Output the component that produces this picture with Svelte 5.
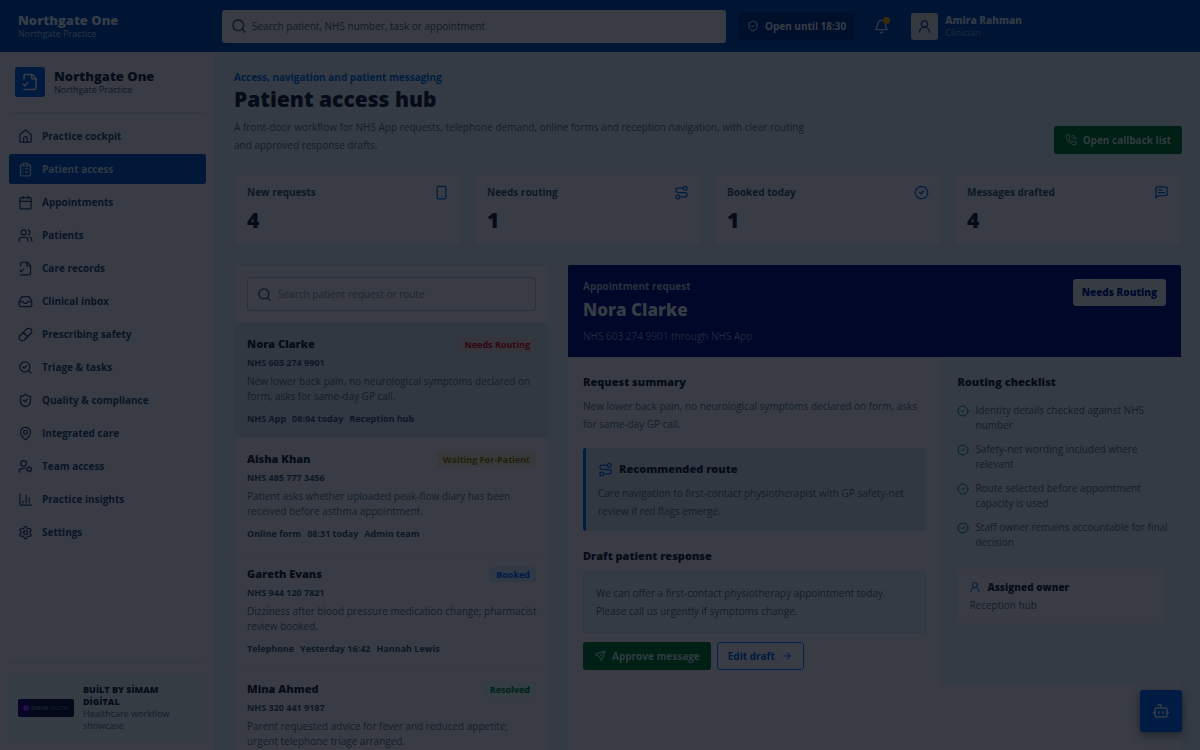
<script>
  const icons = {
    home: '<path d="M15 21v-6a3 3 0 0 0-6 0v6"/><path d="M3 10a2 2 0 0 1 .709-1.528l7-5.999a2 2 0 0 1 2.582 0l7 5.999A2 2 0 0 1 21 10v9a2 2 0 0 1-2 2H5a2 2 0 0 1-2-2z"/>',
    clipboard: '<rect x="8" y="2" width="8" height="4" rx="1"/><path d="M16 4h2a2 2 0 0 1 2 2v14a2 2 0 0 1-2 2H6a2 2 0 0 1-2-2V6a2 2 0 0 1 2-2h2M12 11h4M12 16h4M8 11h.01M8 16h.01"/>',
    calendar: '<path d="M8 2v4M16 2v4M3 10h18"/><rect x="3" y="4" width="18" height="18" rx="2"/>',
    users: '<path d="M16 21v-2a4 4 0 0 0-4-4H6a4 4 0 0 0-4 4v2"/><circle cx="9" cy="7" r="4"/><path d="M22 21v-2a4 4 0 0 0-3-3.870M16 3.130a4 4 0 0 1 0 7.750"/>',
    file: '<path d="M4 22h14a2 2 0 0 0 2-2V7l-5-5H6a2 2 0 0 0-2 2v4"/><path d="M14 2v4a2 2 0 0 0 2 2h4M3 15l2 2 4-4"/>',
    inbox: '<path d="M22 12h-6l-2 3h-4l-2-3H2"/><path d="M5.45 5.11 2 12v6a2 2 0 0 0 2 2h16a2 2 0 0 0 2-2v-6l-3.45-6.89A2 2 0 0 0 16.76 4H7.24a2 2 0 0 0-1.79 1.11z"/>',
    pill: '<path d="m10.5 20.5 10-10a4.95 4.95 0 1 0-7-7l-10 10a4.95 4.95 0 1 0 7 7ZM8.5 8.5l7 7"/>',
    triage: '<path d="m8 11 2 2 4-4M21 21l-4.3-4.3"/><circle cx="11" cy="11" r="8"/>',
    shield: '<path d="M20 13c0 5-3.5 7.5-7.66 8.95a1 1 0 0 1-.67-.01C7.5 20.5 4 18 4 13V6a1 1 0 0 1 1-1c2 0 4.5-1.2 6.24-2.72a1.17 1.17 0 0 1 1.52 0C14.51 3.81 17 5 19 5a1 1 0 0 1 1 1z"/><path d="m9 12 2 2 4-4"/>',
    pin: '<path d="M20 10c0 4.993-5.539 10.193-7.399 11.799a1 1 0 0 1-1.202 0C9.539 20.193 4 14.993 4 10a8 8 0 0 1 16 0"/><circle cx="12" cy="10" r="3"/>',
    team: '<circle cx="9" cy="7" r="4.500"/><path d="M2 21v-1a6 6 0 0 1 6-5h3"/><circle cx="18" cy="16.500" r="3.200"/><path d="M18 12.300v1M18 19.700v1M14.400 14.400l.8.5M20.800 18.100l.8.5M14.400 18.600l.8-.5M20.800 14.900l.8-.5"/>',
    chart: '<path d="M3 3v16a2 2 0 0 0 2 2h16M18 17V9M13 17V5M8 17v-3"/>',
    settings: '<path d="M9.671 4.136a2.34 2.34 0 0 1 4.659 0 2.34 2.34 0 0 0 3.319 1.915 2.34 2.34 0 0 1 2.33 4.033 2.34 2.34 0 0 0 0 3.831 2.34 2.34 0 0 1-2.33 4.033 2.34 2.34 0 0 0-3.319 1.915 2.34 2.34 0 0 1-4.659 0 2.34 2.34 0 0 0-3.32-1.915 2.34 2.34 0 0 1-2.33-4.033 2.34 2.34 0 0 0 0-3.831A2.34 2.34 0 0 1 6.35 6.051a2.34 2.34 0 0 0 3.319-1.915"/><circle cx="12" cy="12" r="3"/>',
    search: '<circle cx="11" cy="11" r="8"/><path d="m21 21-4.3-4.3"/>',
    bell: '<path d="M10.268 21a2 2 0 0 0 3.464 0M3.262 15.326A1 1 0 0 0 4 17h16a1 1 0 0 0 .74-1.673C19.41 13.956 18 12.499 18 8A6 6 0 0 0 6 8c0 4.499-1.411 5.956-2.738 7.326"/>',
    user: '<circle cx="12" cy="8" r="5"/><path d="M20 21a8 8 0 0 0-16 0"/>',
    phone: '<path d="M22 16.92v3a2 2 0 0 1-2.18 2 19.79 19.79 0 0 1-8.63-3.07 19.5 19.5 0 0 1-6-6 19.79 19.79 0 0 1-3.07-8.67A2 2 0 0 1 4.11 2h3a2 2 0 0 1 2 1.72c.127.96.361 1.903.7 2.81a2 2 0 0 1-.45 2.11L8.09 9.91a16 16 0 0 0 6 6l1.27-1.27a2 2 0 0 1 2.11-.45c.907.339 1.85.573 2.81.7A2 2 0 0 1 22 16.92z"/><path d="M14.05 2a9 9 0 0 1 8 7.94M14.05 6A5 5 0 0 1 18 10"/>',
    mobile: '<rect x="5" y="2" width="14" height="20" rx="2"/><path d="M12 18h.01"/>',
    route: '<circle cx="6" cy="19" r="3"/><path d="M9 19h8.500a3.500 3.500 0 0 0 0-7h-11a3.500 3.500 0 0 1 0-7H15"/><circle cx="18" cy="5" r="3"/>',
    check: '<circle cx="12" cy="12" r="10"/><path d="m9 12 2 2 4-4"/>',
    message: '<path d="M21 15a2 2 0 0 1-2 2H7l-4 4V5a2 2 0 0 1 2-2h14a2 2 0 0 1 2 2zM13 8H7M17 12H7"/>',
    send: '<path d="M14.536 21.686a.5.5 0 0 0 .937-.024l6.500-19a.496.496 0 0 0-.635-.635l-19 6.500a.5.5 0 0 0-.024.937l7.930 3.180a2 2 0 0 1 1.112 1.110zM21.854 2.147l-10.940 10.939"/>',
    arrow: '<path d="M5 12h14M12 5l7 7-7 7"/>',
    bot: '<path d="M12 8V4H8"/><rect x="4" y="8" width="16" height="12" rx="2"/><path d="M2 14h2M20 14h2M15 13v2M9 13v2"/>'
  };

  const nav = [
    ['home', 'Practice cockpit'],
    ['clipboard', 'Patient access'],
    ['calendar', 'Appointments'],
    ['users', 'Patients'],
    ['file', 'Care records'],
    ['inbox', 'Clinical inbox'],
    ['pill', 'Prescribing safety'],
    ['triage', 'Triage & tasks'],
    ['shield', 'Quality & compliance'],
    ['pin', 'Integrated care'],
    ['team', 'Team access'],
    ['chart', 'Practice insights'],
    ['settings', 'Settings']
  ];

  const stats = [
    ['New requests', 4, 'mobile'],
    ['Needs routing', 1, 'route'],
    ['Booked today', 1, 'check'],
    ['Messages drafted', 4, 'message']
  ];

  const requests = [
    { name: 'Nora Clarke', nhs: '603 274 9901', status: 'Needs Routing', tone: 'red', text: 'New lower back pain, no neurological symptoms declared on form, asks for same-day GP call.', meta: ['NHS App', '08:04 today', 'Reception hub'] },
    { name: 'Aisha Khan', nhs: '485 777 3456', status: 'Waiting For-Patient', tone: 'amber', text: 'Patient asks whether uploaded peak-flow diary has been received before asthma appointment.', meta: ['Online form', '08:31 today', 'Admin team'] },
    { name: 'Gareth Evans', nhs: '944 120 7821', status: 'Booked', tone: 'blue', text: 'Dizziness after blood pressure medication change; pharmacist review booked.', meta: ['Telephone', 'Yesterday 16:42', 'Hannah Lewis'] },
    { name: 'Mina Ahmed', nhs: '320 441 9187', status: 'Resolved', tone: 'mint', text: 'Parent requested advice for fever and reduced appetite; urgent telephone triage arranged.', meta: [] }
  ];

  const checklist = [
    'Identity details checked against NHS number',
    'Safety-net wording included where relevant',
    'Route selected before appointment capacity is used',
    'Staff owner remains accountable for final decision'
  ];

  let selected = $state(0);
</script>

{#snippet icon(name, size)}
  <svg width={size} height={size} viewBox="0 0 24 24" fill="none" stroke="currentColor" stroke-width="2" stroke-linecap="round" stroke-linejoin="round" aria-hidden="true">{@html icons[name]}</svg>
{/snippet}

<div class="app">
  <header class="topbar">
    <div class="top-brand">
      <strong>Northgate One</strong>
      <span>Northgate Practice</span>
    </div>
    <label class="top-search">
      {@render icon('search', 16)}
      <input type="search" aria-label="Search" placeholder="Search patient, NHS number, task or appointment" />
    </label>
    <div class="hours">{@render icon('shield', 12)}<span>Open until 18:30</span></div>
    <button class="bell" aria-label="Notifications">{@render icon('bell', 15)}<i></i></button>
    <div class="account">
      <span class="avatar">{@render icon('user', 15)}</span>
      <div><strong>Amira Rahman</strong><span>Clinician</span></div>
    </div>
  </header>

  <aside class="sidebar">
    <div class="brand">
      <span class="logo">{@render icon('file', 18)}</span>
      <div><strong>Northgate One</strong><span>Northgate Practice</span></div>
    </div>
    <nav>
      {#each nav as [ic, label], i}
        <a href="#{ic}" class:active={i === 1}>{@render icon(ic, 15)}<span>{label}</span></a>
      {/each}
    </nav>
    <div class="credit">
      <div class="credit-card">
        <span class="maker"><i></i><b>SIMAM</b> DIGITAL</span>
        <div><strong>BUİLT BY SİMAM DİGİTAL</strong><span>Healthcare workflow showcase</span></div>
      </div>
    </div>
  </aside>

  <main>
    <div class="page-head">
      <div>
        <p class="eyebrow">Access, navigation and patient messaging</p>
        <h1>Patient access hub</h1>
        <p class="intro">A front-door workflow for NHS App requests, telephone demand, online forms and reception navigation, with clear routing and approved response drafts.</p>
      </div>
      <button class="btn green">{@render icon('phone', 12)}Open callback list</button>
    </div>

    <section class="stats">
      {#each stats as [label, value, ic]}
        <article>
          <div><span>{label}</span>{@render icon(ic, 15)}</div>
          <strong>{value}</strong>
        </article>
      {/each}
    </section>

    <div class="work">
      <section class="queue">
        <div class="queue-search">
          <label>
            {@render icon('search', 15)}
            <input type="search" aria-label="Search requests" placeholder="Search patient request or route" />
          </label>
        </div>
        {#each requests as r, i}
          <button class="request" class:selected={selected === i} onclick={() => (selected = i)}>
            <span class="row"><strong>{r.name}</strong><em class={r.tone}>{r.status}</em></span>
            <span class="nhs">NHS {r.nhs}</span>
            <span class="text">{r.text}</span>
            {#if r.meta.length}
              <span class="meta">{#each r.meta as m}<span>{m}</span>{/each}</span>
            {/if}
          </button>
        {/each}
      </section>

      <section class="detail">
        <div class="detail-head">
          <div>
            <p class="kind">Appointment request</p>
            <h2>Nora Clarke</h2>
            <p class="via">NHS 603 274 9901 through NHS App</p>
          </div>
          <span class="state">Needs Routing</span>
        </div>
        <div class="detail-body">
          <div class="summary">
            <h3>Request summary</h3>
            <p>New lower back pain, no neurological symptoms declared on form, asks for same-day GP call.</p>
            <div class="recommended">
              <h3>{@render icon('route', 15)}Recommended route</h3>
              <p>Care navigation to first-contact physiotherapist with GP safety-net review if red flags emerge.</p>
            </div>
            <h3>Draft patient response</h3>
            <div class="draft"><p>We can offer a first-contact physiotherapy appointment today. Please call us urgently if symptoms change.</p></div>
            <div class="actions">
              <button class="btn green">{@render icon('send', 12)}Approve message</button>
              <button class="btn outline">Edit draft{@render icon('arrow', 12)}</button>
            </div>
          </div>
          <aside class="checks">
            <h3>Routing checklist</h3>
            <ul>
              {#each checklist as c}
                <li>{@render icon('check', 12)}<span>{c}</span></li>
              {/each}
            </ul>
            <div class="owner">
              <h4>{@render icon('user', 12)}Assigned owner</h4>
              <p>Reception hub</p>
            </div>
          </aside>
        </div>
      </section>
    </div>
  </main>

  <button class="assistant" aria-label="Open assistant">{@render icon('bot', 18)}</button>
</div>

<style>
  :global(body) {
    margin: 0;
    background: #343b44;
  }
  .app {
    --card: #393c44;
    --page: #343b44;
    --line: #333942;
    --ink: #060c17;
    --text: #0c1726;
    --soft: #131c29;
    --accent: #001c40;
    height: 100vh;
    display: grid;
    grid-template: 52px minmax(0, 1fr) / 216px minmax(0, 1fr);
    font: 10px/15px "Open Sans", "Noto Sans", sans-serif;
    color: var(--soft);
    background: var(--page);
  }
  .app :global(*) {
    box-sizing: border-box;
  }
  .app :global(svg) {
    flex: none;
    display: block;
  }
  p, h1, h2, h3, h4, ul {
    margin: 0;
    padding: 0;
  }
  strong, h1, h2, h3, h4 {
    font-weight: 800;
    color: var(--ink);
  }
  button, input {
    font: inherit;
    color: inherit;
  }
  button {
    cursor: pointer;
  }
  input {
    flex: 1;
    min-width: 0;
    padding: 0;
    border: 0;
    outline: 0;
    background: none;
  }

  .topbar {
    grid-column: 1 / -1;
    display: flex;
    align-items: center;
    padding: 0 18px;
    background: #001533;
  }
  .top-brand {
    width: 204px;
    flex: none;
  }
  .top-brand strong, .top-brand span, .brand strong, .brand div span, .account strong, .account div span {
    display: block;
  }
  .top-brand strong {
    font-size: 13px;
    line-height: 16px;
    color: #363d48;
  }
  .top-brand span {
    font-size: 9px;
    line-height: 12px;
    color: #2b3544;
  }
  .top-search {
    flex: 0 1 504px;
    height: 33px;
    display: flex;
    align-items: center;
    gap: 5px;
    padding: 0 9px;
    border-radius: 3px;
    background: #393c42;
    color: #0d1622;
  }
  .top-search input::placeholder {
    color: #111a26;
    opacity: 1;
  }
  .hours {
    display: flex;
    align-items: center;
    gap: 6px;
    height: 28px;
    margin-left: 12px;
    padding: 0 9px;
    border-radius: 3px;
    background: #00102b;
    color: #363d46;
    font-weight: 700;
  }
  .bell {
    position: relative;
    display: grid;
    place-items: center;
    width: 30px;
    height: 30px;
    margin-left: 11px;
    padding: 0;
    border: 0;
    background: none;
    color: #303946;
  }
  .bell i {
    position: absolute;
    top: 6px;
    right: 6px;
    width: 7px;
    height: 7px;
    border-radius: 50%;
    background: #3b2a08;
  }
  .account {
    display: flex;
    align-items: center;
    gap: 7px;
    margin-left: 15px;
  }
  .avatar {
    display: grid;
    place-items: center;
    width: 27px;
    height: 27px;
    border-radius: 3px;
    background: #34393f;
    color: #0a1430;
  }
  .account strong {
    line-height: 14px;
    color: #303945;
  }
  .account div span {
    font-size: 9px;
    line-height: 12px;
    color: #1f2c3e;
  }

  .sidebar {
    display: flex;
    flex-direction: column;
    padding: 0 9px;
    border-right: 1px solid var(--line);
    background: var(--card);
  }
  .brand {
    display: flex;
    align-items: center;
    gap: 9px;
    height: 61px;
    padding-left: 6px;
    border-bottom: 1px solid var(--line);
  }
  .logo {
    display: grid;
    place-items: center;
    width: 30px;
    height: 30px;
    border-radius: 3px;
    background: #001a40;
    color: #3a4048;
  }
  .brand strong {
    font-size: 13px;
    line-height: 16px;
  }
  .brand div span {
    font-size: 9px;
    line-height: 12px;
    color: var(--text);
  }
  nav {
    flex: 1;
    display: flex;
    flex-direction: column;
    gap: 3px;
    padding-top: 8px;
  }
  nav a {
    display: flex;
    align-items: center;
    gap: 9px;
    height: 30px;
    padding: 0 9px;
    border-radius: 3px;
    color: #091426;
    font-weight: 700;
    text-decoration: none;
  }
  nav a.active {
    background: #001738;
    color: #303944;
  }
  .credit {
    padding: 12px 0 9px;
    border-top: 1px solid var(--line);
  }
  .credit-card {
    display: flex;
    align-items: center;
    gap: 9px;
    padding: 9px;
    border-radius: 3px;
    background: #353c44;
    font-size: 9px;
    line-height: 12px;
  }
  .credit-card strong, .credit-card div span {
    display: block;
  }
  .maker {
    flex: none;
    display: flex;
    align-items: center;
    justify-content: center;
    gap: 2px;
    width: 56px;
    height: 18px;
    border-radius: 2px;
    background: linear-gradient(90deg, #09042a, #020817 40%);
    color: #1b2230;
    font-size: 5px;
    white-space: nowrap;
  }
  .maker i {
    width: 6px;
    height: 6px;
    border-radius: 50%;
    background: #220c4c;
  }

  main {
    padding: 18px;
    overflow: auto;
    scrollbar-width: none;
  }
  .page-head {
    display: flex;
    align-items: flex-end;
    justify-content: space-between;
    gap: 18px;
  }
  .eyebrow {
    font-weight: 700;
    color: var(--accent);
  }
  h1 {
    font-size: 21px;
    line-height: 29px;
  }
  .intro {
    max-width: 580px;
    margin-top: 4px;
    line-height: 18px;
  }
  .btn {
    display: inline-flex;
    align-items: center;
    gap: 6px;
    height: 28px;
    padding: 0 10px;
    border: 1px solid transparent;
    border-radius: 3px;
    font-weight: 700;
    white-space: nowrap;
  }
  .green {
    background: #001f15;
    color: #303c40;
  }
  .outline {
    border-color: #002353;
    background: none;
    color: #001a42;
  }

  .stats {
    display: grid;
    grid-template-columns: repeat(4, minmax(0, 1fr));
    gap: 12px;
    margin: 19px 0 18px;
  }
  .stats article {
    padding: 11px 12px;
    height: 73px;
    border: 1px solid var(--line);
    border-radius: 3px;
    background: var(--card);
  }
  .stats article div {
    display: flex;
    align-items: center;
    justify-content: space-between;
    font-weight: 700;
    color: var(--text);
  }
  .stats :global(svg) {
    color: var(--accent);
  }
  .stats strong {
    display: block;
    margin-top: 6px;
    font-size: 21px;
    line-height: 28px;
  }

  .work {
    display: grid;
    grid-template-columns: minmax(0, 315fr) minmax(0, 615fr);
    gap: 18px;
  }
  .queue, .detail {
    border: 1px solid var(--line);
    border-radius: 3px;
    background: var(--card);
    overflow: hidden;
  }
  .queue-search {
    padding: 12px;
  }
  .queue-search label {
    display: flex;
    align-items: center;
    gap: 6px;
    height: 34px;
    padding: 0 9px;
    border: 1px solid #28313c;
    border-radius: 3px;
    color: #0d1726;
  }
  .queue-search input::placeholder {
    color: #1c2530;
    opacity: 1;
  }
  .request {
    display: flex;
    flex-direction: column;
    width: 100%;
    padding: 12px 9px 11px 12px;
    border: 0;
    border-bottom: 1px solid #363a42;
    background: none;
    text-align: left;
  }
  .request.selected {
    background: #313842;
  }
  .row {
    display: flex;
    align-items: center;
    justify-content: space-between;
    margin: 0 3px 3px 0;
    line-height: 18px;
  }
  .row strong {
    font-size: 11px;
  }
  .row em {
    padding: 0 6px;
    border-radius: 3px;
    font-size: 9px;
    line-height: 15px;
    font-style: normal;
    font-weight: 700;
  }
  .red {
    background: #35353d;
    color: #35040f;
  }
  .amber {
    background: #38393a;
    color: #231f0c;
  }
  .blue {
    background: #313945;
    color: #00184a;
  }
  .mint {
    background: #333d42;
    color: #002018;
  }
  .nhs, .meta {
    font-size: 9px;
    line-height: 14px;
    font-weight: 700;
    color: var(--text);
  }
  .text {
    margin: 4px 0 8px;
  }
  .meta {
    display: flex;
    gap: 6px;
  }

  .detail-head {
    display: flex;
    align-items: flex-start;
    justify-content: space-between;
    margin: -1px -1px 0;
    padding: 15px 16px 12px;
    background: #000728;
  }
  .kind {
    font-weight: 700;
    color: #27313f;
  }
  h2 {
    margin-top: 3px;
    font-size: 17px;
    line-height: 26px;
    color: #343c44;
  }
  .via {
    margin-top: 4px;
    line-height: 18px;
    color: #1e2a3f;
  }
  .state {
    padding: 0 9px;
    border-radius: 3px;
    background: #363c42;
    color: #000a2c;
    font-weight: 800;
    line-height: 27px;
  }
  .detail-body {
    display: grid;
    grid-template-columns: minmax(0, 374fr) minmax(0, 240fr);
    align-items: start;
    min-height: 480px;
  }
  .summary {
    padding: 15px;
  }
  h3 {
    display: flex;
    align-items: center;
    gap: 6px;
    font-size: 11px;
    line-height: 20px;
  }
  .summary p {
    line-height: 18px;
  }
  .summary > p {
    margin-top: 5px;
  }
  .recommended {
    margin: 15px 0;
    padding: 11px 12px;
    border-left: 3px solid #001c45;
    border-radius: 3px;
    background: #313842;
  }
  .recommended p {
    margin-top: 5px;
  }
  .recommended :global(svg) {
    color: var(--accent);
  }
  .draft {
    margin-top: 5px;
    padding: 12px;
    border: 1px solid #303843;
    border-radius: 3px;
    background: #343b44;
  }
  .actions {
    display: flex;
    gap: 6px;
    margin-top: 9px;
  }
  .checks {
    min-height: 327px;
    padding: 15px 9px 15px 15px;
    border-left: 1px solid var(--line);
    background: #343b44;
  }
  .checks ul {
    display: grid;
    gap: 9px;
    margin-top: 11px;
    list-style: none;
  }
  .checks li {
    display: flex;
    gap: 6px;
  }
  .checks li :global(svg) {
    margin-top: 2px;
    color: #00251d;
  }
  .owner {
    margin: 18px 6px 0 0;
    padding: 9px 11px;
    border: 1px solid #363b43;
    border-radius: 3px;
    background: var(--card);
  }
  .owner h4 {
    display: flex;
    align-items: center;
    gap: 6px;
    font-size: 10px;
    line-height: 18px;
  }
  .owner h4 :global(svg) {
    color: var(--accent);
  }
  .owner p {
    line-height: 18px;
  }
  .assistant {
    position: fixed;
    right: 18px;
    bottom: 18px;
    display: grid;
    place-items: center;
    width: 42px;
    height: 42px;
    padding: 0;
    border: 0;
    border-radius: 3px;
    background: #001c45;
    color: #343d47;
    box-shadow: 0 3px 8px #1c232d;
  }
</style>
